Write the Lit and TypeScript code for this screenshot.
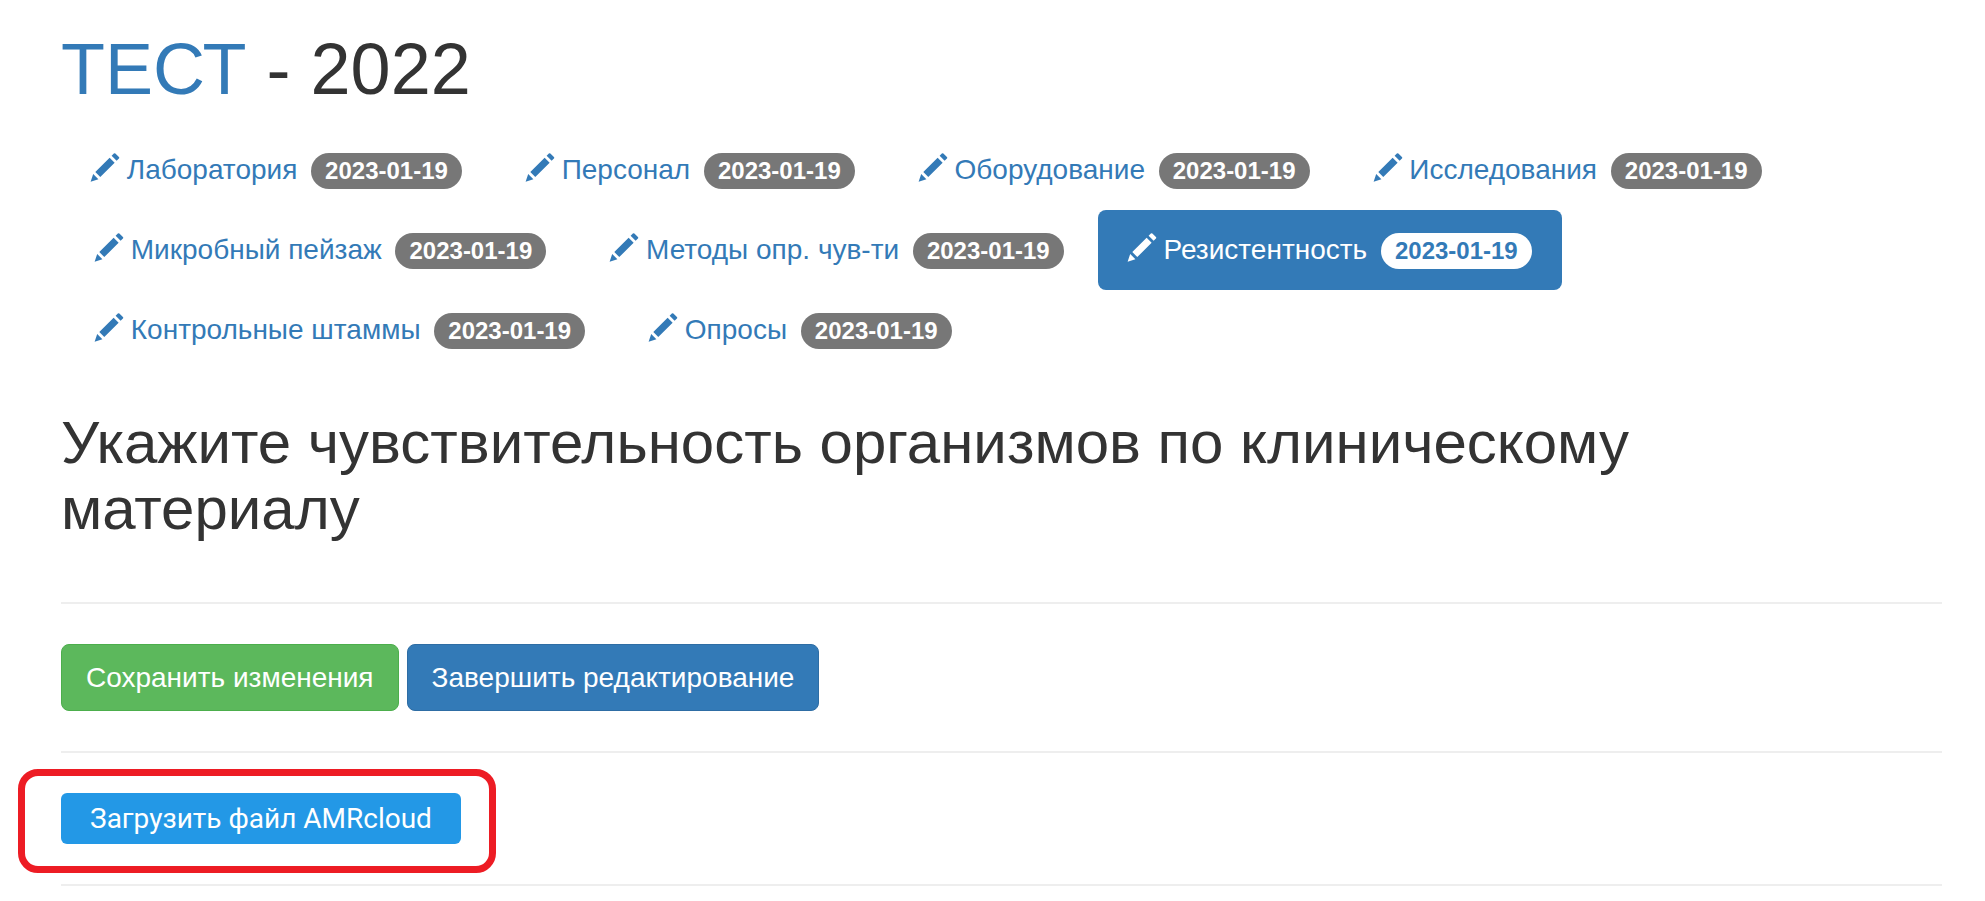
import { LitElement, html, css } from "lit";
import { customElement, property, state } from "lit/decorators.js";
import { classMap } from "lit/directives/class-map.js";

interface Section {
  label: string;
  date: string;
}

const SECTIONS: Section[] = [
  { label: "Лаборатория", date: "2023-01-19" },
  { label: "Персонал", date: "2023-01-19" },
  { label: "Оборудование", date: "2023-01-19" },
  { label: "Исследования", date: "2023-01-19" },
  { label: "Микробный пейзаж", date: "2023-01-19" },
  { label: "Методы опр. чув-ти", date: "2023-01-19" },
  { label: "Резистентность", date: "2023-01-19" },
  { label: "Контрольные штаммы", date: "2023-01-19" },
  { label: "Опросы", date: "2023-01-19" },
];

@customElement("pencil-icon")
export class PencilIcon extends LitElement {
  static styles = css`
    :host {
      display: inline-block;
      width: 28px;
      height: 28px;
      vertical-align: -8px;
    }
    .glyph {
      display: block;
      width: 100%;
      height: 100%;
      overflow: visible;
      fill: currentColor;
    }
  `;

  render() {
    return html`<svg class="glyph" viewBox="0 -960 1200 1200" aria-hidden="true">
      <path
        transform="scale(1 -1)"
        d="M1011 1210q19 0 33 -13l153 -153q13 -14 13 -33t-13 -33l-99 -92l-214 214l95 96q13 14 32 14zM1013 800l-615 -614l-214 214l614 614zM317 96l-333 -112l110 335z"
      />
    </svg>`;
  }
}

@customElement("section-nav")
export class SectionNav extends LitElement {
  @property({ attribute: false }) sections: Section[] = [];
  @state() private active = 6;

  static styles = css`
    :host {
      display: block;
    }
    .pills {
      display: flex;
      flex-wrap: wrap;
      margin: 0;
      padding: 0;
      list-style: none;
    }
    .item + .item {
      margin-left: 4px;
    }
    .link {
      display: block;
      height: 40px;
      padding: 20px 30px;
      border-radius: 8px;
      color: #337ab7;
      line-height: 40px;
      text-decoration: none;
      white-space: nowrap;
    }
    .link.active {
      background: #337ab7;
      color: #fff;
    }
    .badge {
      display: inline-block;
      margin-left: 6px;
      padding: 6px 14px;
      border-radius: 20px;
      background: #777;
      color: #fff;
      font-size: 24px;
      font-weight: 700;
      line-height: 24px;
    }
    .active .badge {
      background: #fff;
      color: #337ab7;
    }
  `;

  private select(event: Event, index: number) {
    event.preventDefault();
    this.active = index;
  }

  render() {
    return html`<nav>
      <ul class="pills">
        ${this.sections.map(
          (s, i) => html`<li class="item">
            <a
              href="#"
              class=${classMap({ link: true, active: i === this.active })}
              @click=${(e: Event) => this.select(e, i)}
              ><pencil-icon></pencil-icon> ${s.label} <span class="badge">${s.date}</span></a
            >
          </li>`
        )}
      </ul>
    </nav>`;
  }
}

@customElement("app-root")
export class AppRoot extends LitElement {
  static styles = css`
    :host {
      display: block;
      padding: 30px 43px 16px 61px;
      background: #fff;
      color: #333;
      font-family: "Liberation Sans", Arial, sans-serif;
      font-size: 28px;
      line-height: 40px;
    }
    .title {
      margin: 0 0 22px;
      font-size: 72px;
      font-weight: 400;
      line-height: 78px;
    }
    .title-link {
      color: #337ab7;
      text-decoration: none;
    }
    .heading {
      margin: 40px 0 60px;
      padding-right: 30px;
      font-size: 60px;
      font-weight: 400;
      line-height: 66px;
    }
    .rule {
      margin: 0;
      border: 0;
      border-top: 2px solid #eee;
    }
    .actions {
      display: flex;
      flex-wrap: wrap;
      gap: 8px;
      padding: 40px 0;
    }
    .btn {
      padding: 12px 24px;
      border: 1px solid;
      border-radius: 8px;
      color: #fff;
      font: inherit;
      line-height: 41px;
      cursor: pointer;
    }
    .save {
      background: #5cb85c;
      border-color: #4cae4c;
    }
    .finish {
      background: #337ab7;
      border-color: #2e6da4;
    }
    .upload-row {
      display: flex;
      padding: 40px 0;
    }
    .upload-box {
      position: relative;
    }
    .upload {
      display: block;
      padding: 6px 29px;
      border: 0;
      border-radius: 6px;
      background: #2398e6;
      color: #fff;
      font-family: Roboto, sans-serif;
      font-size: 28px;
      line-height: 39px;
      cursor: pointer;
    }
    .highlight {
      position: absolute;
      inset: -24px -35px -29px -43px;
      border: 7px solid #ed1c24;
      border-radius: 20px;
      pointer-events: none;
    }
  `;

  render() {
    return html`
      <h1 class="title"><a class="title-link" href="#">ТЕСТ</a> - 2022</h1>
      <section-nav .sections=${SECTIONS}></section-nav>
      <h2 class="heading">Укажите чувствительность организмов по клиническому материалу</h2>
      <hr class="rule" />
      <div class="actions">
        <button class="btn save" type="button">Сохранить изменения</button>
        <button class="btn finish" type="button">Завершить редактирование</button>
      </div>
      <hr class="rule" />
      <div class="upload-row">
        <div class="upload-box">
          <button class="upload" type="button">Загрузить файл AMRcloud</button>
          <div class="highlight"></div>
        </div>
      </div>
      <hr class="rule" />
    `;
  }
}
